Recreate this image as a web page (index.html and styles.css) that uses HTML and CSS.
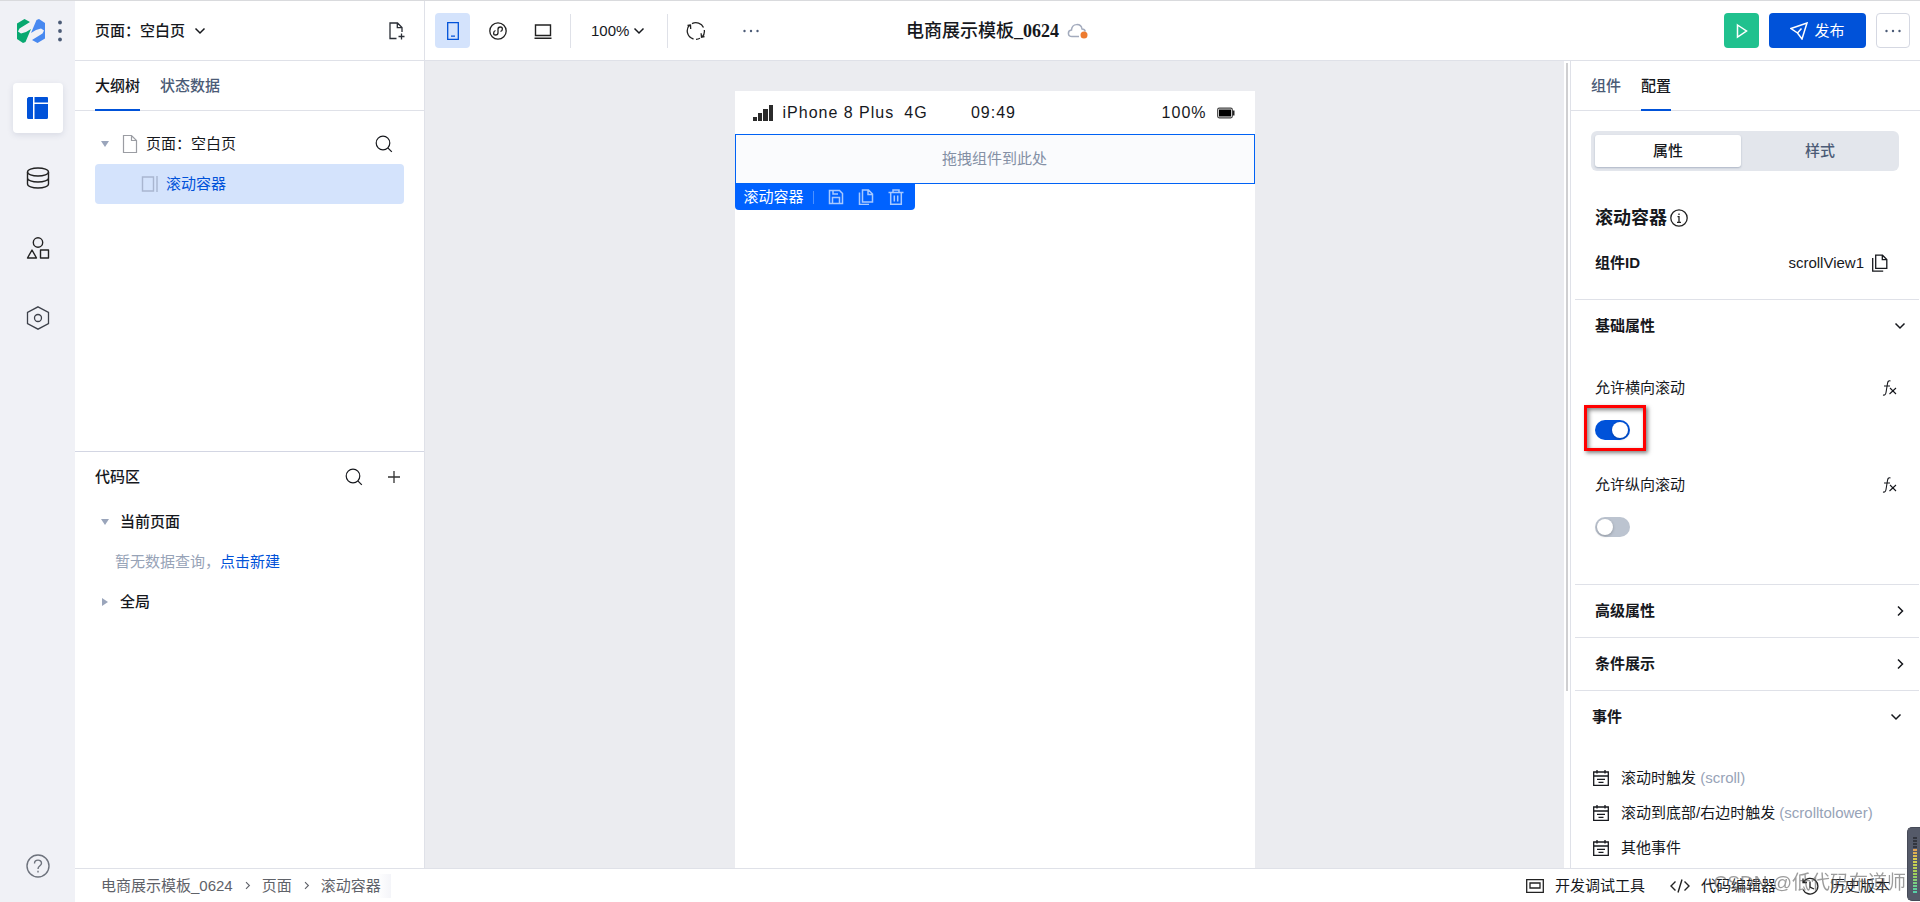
FILE: index.html
```html
<!DOCTYPE html>
<html lang="zh-CN">
<head>
<meta charset="utf-8">
<title>电商展示模板_0624</title>
<link rel="stylesheet" href="styles.css">
</head>
<body>
<svg class="sprite" aria-hidden="true">
  <symbol id="chev-down" viewBox="0 0 12 12"><path d="M1.500 3.500 6 8l4.500-4.500" fill="none" stroke="currentColor" stroke-width="1.500"/></symbol>
  <symbol id="chev-right" viewBox="0 0 12 12"><path d="M4 1.500 8.500 6 4 10.500" fill="none" stroke="currentColor" stroke-width="1.500"/></symbol>
  <symbol id="dots" viewBox="0 0 18 18"><g fill="currentColor"><circle cx="2.500" cy="9" r="1.200"/><circle cx="9" cy="9" r="1.200"/><circle cx="15.500" cy="9" r="1.200"/></g></symbol>
  <symbol id="search" viewBox="0 0 18 18"><g fill="none" stroke="currentColor" stroke-width="1.200"><circle cx="8" cy="8" r="6.800"/><path d="m12.800 12.800 4 4"/></g></symbol>
  <symbol id="event" viewBox="0 0 18 18"><g fill="none" stroke="currentColor" stroke-width="1.300"><path d="M1.700 3h14.600v13.300H1.700zM1.700 7h14.600M5 1v3.500M13 1v3.500M5 10.300h8M6.500 13.300h5"/></g></symbol>
  <symbol id="fx" viewBox="0 0 16 18"><g fill="none" stroke="currentColor" stroke-width="1.100"><path d="M8.500 2C6.500 1.300 5.800 2.500 5.500 4.500L4 13.500c-.4 2-1.200 3-3 2.500M2 7h6M8 9l6 6M14 9l-6.500 6"/></g></symbol>
  <symbol id="copy" viewBox="0 0 18 18"><g fill="none" stroke="currentColor" stroke-width="1.300"><path d="M4.700 1.200h6.800l4.300 4.300v8.800H4.700zM11.300 1.200v4.500h4.500M1.700 4v13.200h10.500"/></g></symbol>
</svg>

<div class="app">
  <nav class="rail" aria-label="主导航">
    <div class="brand">
      <svg width="28" height="24" viewBox="0 0 28 24"><path fill="#07a870" d="M0 4.500 7.500 0 13 3 2.500 9.500 1 12.500l3 2 5-1.500L14 10l-5.500 13L6 24l-6-4z"/><path fill="#4788f0" d="M28 19.500 20.500 24 15 21l10.500-6.500 1.500-3-3-2-5 1.500-5 3L19.500 1 22 0l6 4z"/></svg>
      <svg width="4" height="22" viewBox="0 0 4 22" fill="#4b5b76"><circle cx="2" cy="2.500" r="1.900"/><circle cx="2" cy="11" r="1.900"/><circle cx="2" cy="19.500" r="1.900"/></svg>
    </div>
    <button class="rail-btn active" aria-label="页面"><svg width="22" height="22" viewBox="0 0 22 22" fill="#0052d9"><path d="M1.500 0H6v22H1.500A1.500 1.500 0 0 1 0 20.500v-19zM7.500 0H20a1 1 0 0 1 1 1v4.500H7.500zM7.500 7H21v13.500a1.500 1.500 0 0 1-1.500 1.500h-12z"/></svg></button>
    <button class="rail-btn" aria-label="数据"><svg width="24" height="22" viewBox="0 0 24 22" fill="none" stroke="#222" stroke-width="1.400"><ellipse cx="12" cy="5" rx="10.500" ry="4"/><path d="M1.500 5v12c0 2.300 4.700 4 10.500 4s10.500-1.700 10.500-4V5M1.500 11c0 2.300 4.700 4 10.500 4s10.500-1.700 10.500-4"/></svg></button>
    <button class="rail-btn" aria-label="组件"><svg width="24" height="22" viewBox="0 0 24 22" fill="none" stroke="#222" stroke-width="1.400" stroke-linejoin="round"><circle cx="12" cy="5.500" r="4.700"/><path d="m6 13 4.500 8h-9zM14.500 13h8v8h-8z"/></svg></button>
    <button class="rail-btn" aria-label="设置"><svg width="24" height="24" viewBox="0 0 24 24" fill="none" stroke="#3d414a" stroke-width="1.300"><path d="m12 .8 10.500 5.500v11.400L12 23.200 1.500 17.700V6.300z"/><circle cx="12" cy="12" r="3.500"/></svg></button>
    <button class="rail-btn help" aria-label="帮助"><svg width="24" height="24" viewBox="0 0 24 24" fill="none" stroke="#6e737d" stroke-width="1.400"><circle cx="12" cy="12" r="11"/><path d="M8.500 9.500C8.500 5 15.500 5 15.500 9.200c0 2.600-3.500 2.500-3.500 5.800M12 16.800v1.800"/></svg></button>
  </nav>

  <div class="main">
    <header class="topbar">
      <div class="top-left">
        <div class="page-pick">
          <button class="plain page-btn">页面：空白页<svg width="12" height="12"><use href="#chev-down"/></svg></button>
          <button class="plain" aria-label="新建页面"><svg width="18" height="20" viewBox="0 0 18 20" fill="none" stroke="#2a2e36" stroke-width="1.300"><path d="M8.500 17.500H2V2h7.500l4.500 4.500V11M9.300 2v4.700H14M13.500 12.500v6M10.500 15.500h6"/></svg></button>
        </div>
        <div class="tools">
          <button class="tool on" aria-label="手机"><svg width="12" height="18" viewBox="0 0 12 18" fill="none" stroke="#0052d9" stroke-width="1.300"><path d="M.7.700h10.600v16.600H.7zM4 14.200h4"/></svg></button>
          <button class="tool" aria-label="小程序"><svg width="18" height="18" viewBox="0 0 18 18" fill="none" stroke="#222" stroke-width="1.300"><circle cx="9" cy="9" r="8.200"/><path d="M6.500 8.500C4 9.500 4 13 6.500 13 8 13 9 12 9 10.800V7.200C9 6 10 5 11.500 5c2.500 0 2.500 3.500 0 4.500"/></svg></button>
          <button class="tool" aria-label="电脑"><svg width="18" height="18" viewBox="0 0 18 18" fill="none" stroke="#222" stroke-width="1.400"><path d="M1.500 3h15v10.500h-15zM.5 16.300h17"/></svg></button>
          <span class="sep"></span>
          <button class="plain zoom">100%<svg width="12" height="12"><use href="#chev-down"/></svg></button>
          <span class="sep"></span>
          <button class="tool" aria-label="刷新"><svg width="20" height="20" viewBox="0 0 20 20" fill="none" stroke="#222" stroke-width="1.300"><path d="M4 3.800A8.300 8.300 0 0 0 7.500 18M16 16.200A8.300 8.300 0 0 0 18.300 9M6 2.600A8.300 8.300 0 0 1 17.500 6.500M14 17.300a8.300 8.300 0 0 1-4 1M1.500 4.500l3-.5.200 4M18.500 15.500l-3 .8-.4-4"/></svg></button>
          <button class="tool more" aria-label="更多"><svg width="18" height="18"><use href="#dots"/></svg></button>
        </div>
      </div>
      <h1 class="title"><span>电商展示模板<b>_0624</b></span><svg width="22" height="16" viewBox="0 0 22 16"><path d="M12 13.500H5C.3 13.500.3 7.500 4.500 7 5 0 14 0 15 6c2 .1 3 1.200 3.300 2.500" fill="none" stroke="#a3abbd" stroke-width="1.500"/><circle cx="17" cy="12" r="3.500" fill="#ed7b2f"/></svg></h1>
      <div class="actions">
        <button class="act play" aria-label="预览"><svg width="12" height="16" viewBox="0 0 12 16" fill="none" stroke="#fff" stroke-width="1.500"><path d="m1.500 2 9 6-9 6z"/></svg></button>
        <button class="act publish"><svg width="18" height="18" viewBox="0 0 18 18" fill="none" stroke="#fff" stroke-width="1.500"><path d="M1 6.500 17 1l-5 16-4.500-6zM7.500 11l4-4.500"/></svg>发布</button>
        <button class="act ghost" aria-label="更多操作"><svg width="18" height="18"><use href="#dots"/></svg></button>
      </div>
    </header>

    <div class="work">
      <aside class="left">
        <section class="outline">
          <div class="tabs"><button class="tab cur">大纲树</button><button class="tab">状态数据</button></div>
          <div class="tree">
            <div class="node"><span class="arrow open"></span><svg class="file" width="16" height="20" viewBox="0 0 16 20" fill="none" stroke="#9b9da3" stroke-width="1.200"><path d="M1.500 1.500h8l5 5v12h-13zM9.500 1.500v5h5"/></svg><span>页面：空白页</span><button class="plain push" aria-label="搜索"><svg width="18" height="18"><use href="#search"/></svg></button></div>
            <div class="node picked"><svg width="18" height="18" viewBox="0 0 18 18" fill="none" stroke="#a9b6d0" stroke-width="1.400"><path d="M1.500 2h11v14h-11zM16 1v16"/></svg><span>滚动容器</span></div>
          </div>
        </section>
        <section class="code">
          <div class="code-head"><h2>代码区</h2><button class="plain push" aria-label="搜索代码"><svg width="18" height="18"><use href="#search"/></svg></button><button class="plain" aria-label="新建"><svg width="14" height="14" viewBox="0 0 14 14"><path d="M7 1v12M1 7h12" stroke="#333" stroke-width="1.300"/></svg></button></div>
          <div class="code-row strong"><span class="arrow open"></span>当前页面</div>
          <p class="empty">暂无数据查询，<a href="#new">点击新建</a></p>
          <div class="code-row strong"><span class="arrow shut"></span>全局</div>
        </section>
      </aside>

      <main class="canvas">
        <div class="phone">
          <div class="status">
            <div class="st-left"><svg width="20" height="16" viewBox="0 0 20 16" fill="#2b2b2b"><path d="M0 12h4v4H0zM5 8h4v8H5zM10 4h5v12h-5zM16 0h4v16h-4z"/></svg><span>iPhone 8 Plus</span><span>4G</span></div>
            <span>09:49</span>
            <div class="st-right"><span>100%</span><svg width="18" height="12" viewBox="0 0 18 12"><rect x=".7" y="1.200" width="14.600" height="9.600" rx="1.500" fill="none" stroke="#444" stroke-width="1.200"/><path d="M2 2.500h12v7H2z"/><path d="M16.500 3.500v5" stroke="#222" stroke-width="2"/></svg></div>
          </div>
          <div class="drop">拖拽组件到此处</div>
          <div class="chip">
            <span class="chip-name">滚动容器</span>
            <button class="plain" aria-label="保存"><svg width="16" height="16" viewBox="0 0 16 16" fill="none" stroke="#a8c9ff" stroke-width="1.500"><path d="M1.500 1.500h10l3 3v10h-13zM4.500 14V8.500h7V14M5 1.500V5h5"/></svg></button>
            <button class="plain" aria-label="复制"><svg width="16" height="16" viewBox="0 0 16 16" fill="none" stroke="#a8c9ff" stroke-width="1.500"><path d="M4.500 1h6L14.500 5v8h-10zM10 1v4.500h4.500M1.500 3.500v12h9.500"/></svg></button>
            <button class="plain" aria-label="删除"><svg width="16" height="16" viewBox="0 0 16 16" fill="none" stroke="#a8c9ff" stroke-width="1.500"><path d="M.5 3.500h15M2.700 3.500v11.700h10.600V3.500M5 3V1h6v2M6.300 6.500v6M9.700 6.500v6"/></svg></button>
          </div>
        </div>
      </main>
      <div class="scroll"><span></span></div>

      <aside class="config">
        <div class="tabs"><button class="tab">组件</button><button class="tab cur">配置</button></div>
        <div class="seg"><button class="seg-on">属性</button><button>样式</button></div>
        <h2 class="comp">滚动容器<svg width="18" height="18" viewBox="0 0 18 18" fill="none" stroke="#222" stroke-width="1.300"><circle cx="9" cy="9" r="8.200"/><path d="M9 4.500V6M7.500 7.700H9v5.500M7 13.300h4"/></svg></h2>
        <div class="idrow"><b>组件ID</b><span>scrollView1</span><button class="plain" aria-label="复制ID"><svg width="18" height="18"><use href="#copy"/></svg></button></div>
        <section class="group">
          <button class="fold">基础属性<svg width="12" height="12"><use href="#chev-down"/></svg></button>
          <div class="props">
            <div class="prop"><label for="hscroll">允许横向滚动</label><button class="plain" aria-label="表达式"><svg width="16" height="18"><use href="#fx"/></svg></button></div>
            <div class="switch-line"><span class="switch-wrap"><input class="switch" type="checkbox" id="hscroll" checked><span class="mark"></span></span></div>
            <div class="prop"><label for="vscroll">允许纵向滚动</label><button class="plain" aria-label="表达式"><svg width="16" height="18"><use href="#fx"/></svg></button></div>
            <div class="switch-line"><span class="switch-wrap"><input class="switch" type="checkbox" id="vscroll"></span></div>
          </div>
        </section>
        <section class="group"><button class="fold">高级属性<svg width="12" height="12"><use href="#chev-right"/></svg></button></section>
        <section class="group"><button class="fold">条件展示<svg width="12" height="12"><use href="#chev-right"/></svg></button></section>
        <section class="group">
          <button class="fold wide">事件<svg width="12" height="12"><use href="#chev-down"/></svg></button>
          <ul class="events">
            <li><svg width="18" height="18"><use href="#event"/></svg><span>滚动时触发 <i>(scroll)</i></span></li>
            <li><svg width="18" height="18"><use href="#event"/></svg><span>滚动到底部/右边时触发 <i>(scrolltolower)</i></span></li>
            <li><svg width="18" height="18"><use href="#event"/></svg><span>其他事件</span></li>
          </ul>
        </section>
      </aside>
    </div>

    <footer class="foot">
      <div class="crumbs"><a href="#app">电商展示模板_0624</a><svg width="9" height="11"><use href="#chev-right"/></svg><a href="#page">页面</a><svg width="9" height="11"><use href="#chev-right"/></svg><a class="last" href="#comp">滚动容器</a></div>
      <div class="foot-tools">
        <button class="plain"><svg width="18" height="14" viewBox="0 0 18 14" fill="none" stroke="#222" stroke-width="1.300"><path d="M.7.700h16.600v12.600H.7zM4 4h10v5H4z"/></svg>开发调试工具</button>
        <button class="plain"><svg width="20" height="14" viewBox="0 0 20 14" fill="none" stroke="#222" stroke-width="1.400"><path d="M5.500 2.500 1 7l4.500 4.500M14.500 2.500 19 7l-4.500 4.500M12 .5 8 13.500"/></svg>代码编辑器</button>
        <button class="plain"><svg width="18" height="18" viewBox="0 0 18 18" fill="none" stroke="#222" stroke-width="1.300"><path d="M2.500 5A7.800 7.800 0 1 1 2 12.500M2 1.500V5.500h4M9 4.500V10l4 2"/></svg>历史版本</button>
      </div>
    </footer>
  </div>
</div>
<div class="credit">CSDN @低代码布道师</div>
<div class="meter"><span class="bars"></span></div>
</body>
</html>
```
FILE: styles.css
```css
* { box-sizing: border-box; }
body, h1, h2, p, ul { margin: 0; padding: 0; }
body {
  font: 15px/24px "Liberation Sans", "Noto Sans CJK SC", sans-serif;
  color: #16181d;
  background: #fff;
  overflow: hidden;
}
button { font: inherit; color: inherit; border: 0; background: none; padding: 0; margin: 0; cursor: pointer; }
a { text-decoration: none; color: inherit; }
svg { display: block; flex: none; }
h2 { font-size: 15px; font-weight: 500; }
.sprite { position: absolute; width: 0; height: 0; }
.plain { display: flex; align-items: center; }
.push { margin-left: auto; }

.app { display: flex; height: 100vh; border-top: 1px solid #d9dadd; }

.rail {
  flex: none; width: 75px;
  background: #f0f1f6;
  display: flex; flex-direction: column; align-items: center; gap: 20px;
  padding-bottom: 11px;
}
.brand { align-self: stretch; height: 62px; display: flex; align-items: center; gap: 13px; padding: 0 0 2px 17px; }
.rail-btn { width: 50px; height: 50px; border-radius: 4px; display: flex; align-items: center; justify-content: center; }
.rail-btn.active { background: #fff; box-shadow: 0 2px 6px rgba(40, 60, 100, .12); }
.rail-btn.help { margin-top: auto; }

.main { flex: 1; min-width: 0; display: flex; flex-direction: column; }
.topbar {
  flex: none; height: 60px;
  display: grid; grid-template-columns: 1fr auto 1fr; align-items: center;
  border-bottom: 1px solid #dfe1e8;
}
.top-left { display: flex; align-self: stretch; }
.page-pick {
  flex: none; width: 350px; padding: 0 18px 0 20px;
  display: flex; align-items: center; justify-content: space-between;
  border-right: 1px solid #dfe1e8;
}
.page-btn { gap: 9px; font-weight: 500; }
.tools { display: flex; align-items: center; gap: 10px; padding-left: 10px; }
.tool { width: 35px; height: 35px; border-radius: 4px; display: flex; align-items: center; justify-content: center; }
.tool.on { background: #d4e3fc; }
.tool.more { margin-left: 10px; color: #4b5b76; }
.sep { width: 1px; height: 34px; background: #dfe1e8; }
.zoom { gap: 4px; padding: 0 12px 0 10px; }
.title {
  display: flex; align-items: center; gap: 8px;
  font: 500 18px/28px "Liberation Serif", "Noto Sans CJK SC", serif;
}
.title b { font-weight: 700; }
.actions { display: flex; justify-content: flex-end; gap: 10px; padding-right: 10px; }
.act { height: 35px; border-radius: 4px; display: flex; align-items: center; justify-content: center; gap: 6px; }
.play { width: 35px; background: #20c18e; }
.publish { width: 97px; background: #0052d9; color: #fff; }
.ghost { width: 34px; border: 1px solid #d5d8e2; color: #4b5b76; }

.work { flex: 1; min-height: 0; display: flex; }
.left { flex: none; width: 350px; border-right: 1px solid #dfe1e8; display: flex; flex-direction: column; }
.outline { height: 390px; }
.tabs { display: flex; gap: 20px; height: 50px; padding: 0 20px; border-bottom: 1px solid #dfe1e8; }
.tab { height: 50px; padding: 2px 0 0; border-bottom: 2px solid transparent; color: #4b5b76; font-weight: 500; }
.tab.cur { color: #16181d; border-color: #0052d9; }
.tree { padding: 13px 20px 0; }
.node { display: flex; align-items: center; height: 40px; padding: 0 11px 0 6px; }
.node .file { margin: 0 8px 0 13px; }
.node.picked { padding-left: 46px; gap: 7px; background: #d4e3fc; border-radius: 4px; color: #0052d9; }
.arrow { flex: none; border: 4px solid transparent; }
.arrow.open { border-top: 6px solid #9aa5bb; border-bottom-width: 0; }
.arrow.shut { border-left: 6px solid #9aa5bb; border-right-width: 0; margin: 0 1px; }
.code { flex: 1; border-top: 1px solid #d3d6e3; }
.code-head { display: flex; align-items: center; height: 50px; padding: 0 23px 0 20px; gap: 24px; }
.code-row { display: flex; align-items: center; height: 40px; gap: 11px; padding-left: 26px; }
.strong { font-weight: 500; }
.empty { padding: 8px 0 8px 40px; color: #97a3b7; }
.empty a { color: #0052d9; }

.canvas { flex: 1; min-width: 0; background: #ebecf0; padding-top: 30px; display: flex; justify-content: center; }
.phone { width: 520px; background: #fff; }
.status {
  display: grid; grid-template-columns: 1fr auto 1fr; align-items: center;
  height: 43px; padding: 0 20px 0 18px;
  font-size: 16px; letter-spacing: 1px;
}
.st-left, .st-right { display: flex; align-items: center; gap: 10px; }
.st-right { justify-content: flex-end; }
.drop {
  height: 50px; line-height: 48px; text-align: center;
  border: 1px solid #0062f5; background: #fafbfd; color: #8490a5;
}
.chip {
  display: inline-flex; align-items: center; gap: 14px;
  height: 26px; padding: 0 11px 0 9px;
  background: #0062ff; color: #fff; border-radius: 0 0 4px 4px;
}
.chip-name { position: relative; margin-right: 10px; }
.chip-name::after { content: ""; position: absolute; right: -10px; top: 6px; width: 1px; height: 13px; background: #4d92ff; }

.scroll { flex: none; width: 6px; padding: 2px 2px 0; background: #fff; }
.scroll span { display: block; width: 2px; height: 78%; background: #cfcfd1; }

.config { flex: none; width: 350px; border-left: 1px solid #dfe1e8; overflow: hidden; }
.seg { display: flex; margin: 20px 21px 0 20px; padding: 4px 0 4px 4px; background: #e3e6ec; border-radius: 6px; font-weight: 500; }
.seg button { flex: 1; height: 32px; border-radius: 3px; color: #4b5b76; }
.seg .seg-on { flex: none; width: 146px; background: #fff; color: #16181d; box-shadow: 0 1px 2px rgba(70, 90, 120, .35); }
.comp { display: flex; align-items: center; gap: 3px; margin: 27px 24px 0; height: 40px; font-size: 18px; font-weight: 700; }
.idrow { display: flex; align-items: center; height: 40px; margin: 5px 31px 16px 24px; gap: 7px; }
.idrow b { flex: 1; font-weight: 700; }
.group { margin: 0 1px 0 4px; border-top: 1px solid #dfe1e8; }
.fold { width: 100%; height: 52px; display: flex; align-items: center; justify-content: space-between; padding: 0 13px 0 20px; font-weight: 700; }
.fold.wide { padding: 0 17px; }
.props { padding: 24px 21px 14px 20px; }
.prop { display: flex; align-items: center; justify-content: space-between; height: 24px; }
.switch-line { height: 73px; padding-top: 20px; }
.switch-wrap { position: relative; display: block; width: 35px; height: 20px; }
.switch {
  appearance: none; display: block; width: 35px; height: 20px; margin: 0; padding-top: 2px;
  border-radius: 10px; background: #bcc4d0;
}
.switch::before {
  content: ""; display: block; width: 16px; height: 16px; border-radius: 50%;
  background: #fff; margin-left: 2px; box-shadow: 0 1px 3px rgba(0, 0, 0, .25);
}
.switch:checked { background: #0052d9; }
.switch:checked::before { margin-left: 17px; }
.mark {
  position: absolute; inset: -15px -16px -11px -11px;
  border: 3px solid #f00;
  box-shadow: 2px 2px 4px rgba(0, 0, 0, .5), inset 2px 2px 4px rgba(0, 0, 0, .5);
  pointer-events: none;
}
.events { list-style: none; padding: 17px 0 0 17px; }
.events li { display: flex; align-items: center; gap: 11px; height: 35px; }
.events i { font-style: normal; color: #97a3b7; }

.foot {
  flex: none; height: 34px; border-top: 1px solid #dfe1e8;
  display: flex; align-items: center; justify-content: space-between;
  padding: 0 30px 0 26px;
}
.crumbs { display: flex; align-items: center; gap: 10px; color: #5f6269; }
.crumbs .last { padding-right: 10px; background: linear-gradient(90deg, #fff 80%, #f4f5f9); }
.foot-tools { display: flex; gap: 25px; }
.foot-tools .plain { gap: 11px; }

.credit { position: fixed; right: 14px; bottom: 7px; font-size: 19px; line-height: 24px; color: rgba(90, 90, 90, .6); pointer-events: none; }
.meter { position: fixed; right: 0; bottom: 1px; width: 13px; height: 74px; padding: 9px 3px 0 5px; background: #555a69; border: 1px solid #464a57; border-right: 0; border-radius: 5px 0 0 5px; }
.bars {
  display: block; height: 57px;
  background:
    repeating-linear-gradient(transparent 0 2px, #555a69 2px 3px),
    linear-gradient(#33363f 0 20%, #e09a55 20%, #d9d04e 40%, #9fd05a 65%, #4fd0b0);
}
```
